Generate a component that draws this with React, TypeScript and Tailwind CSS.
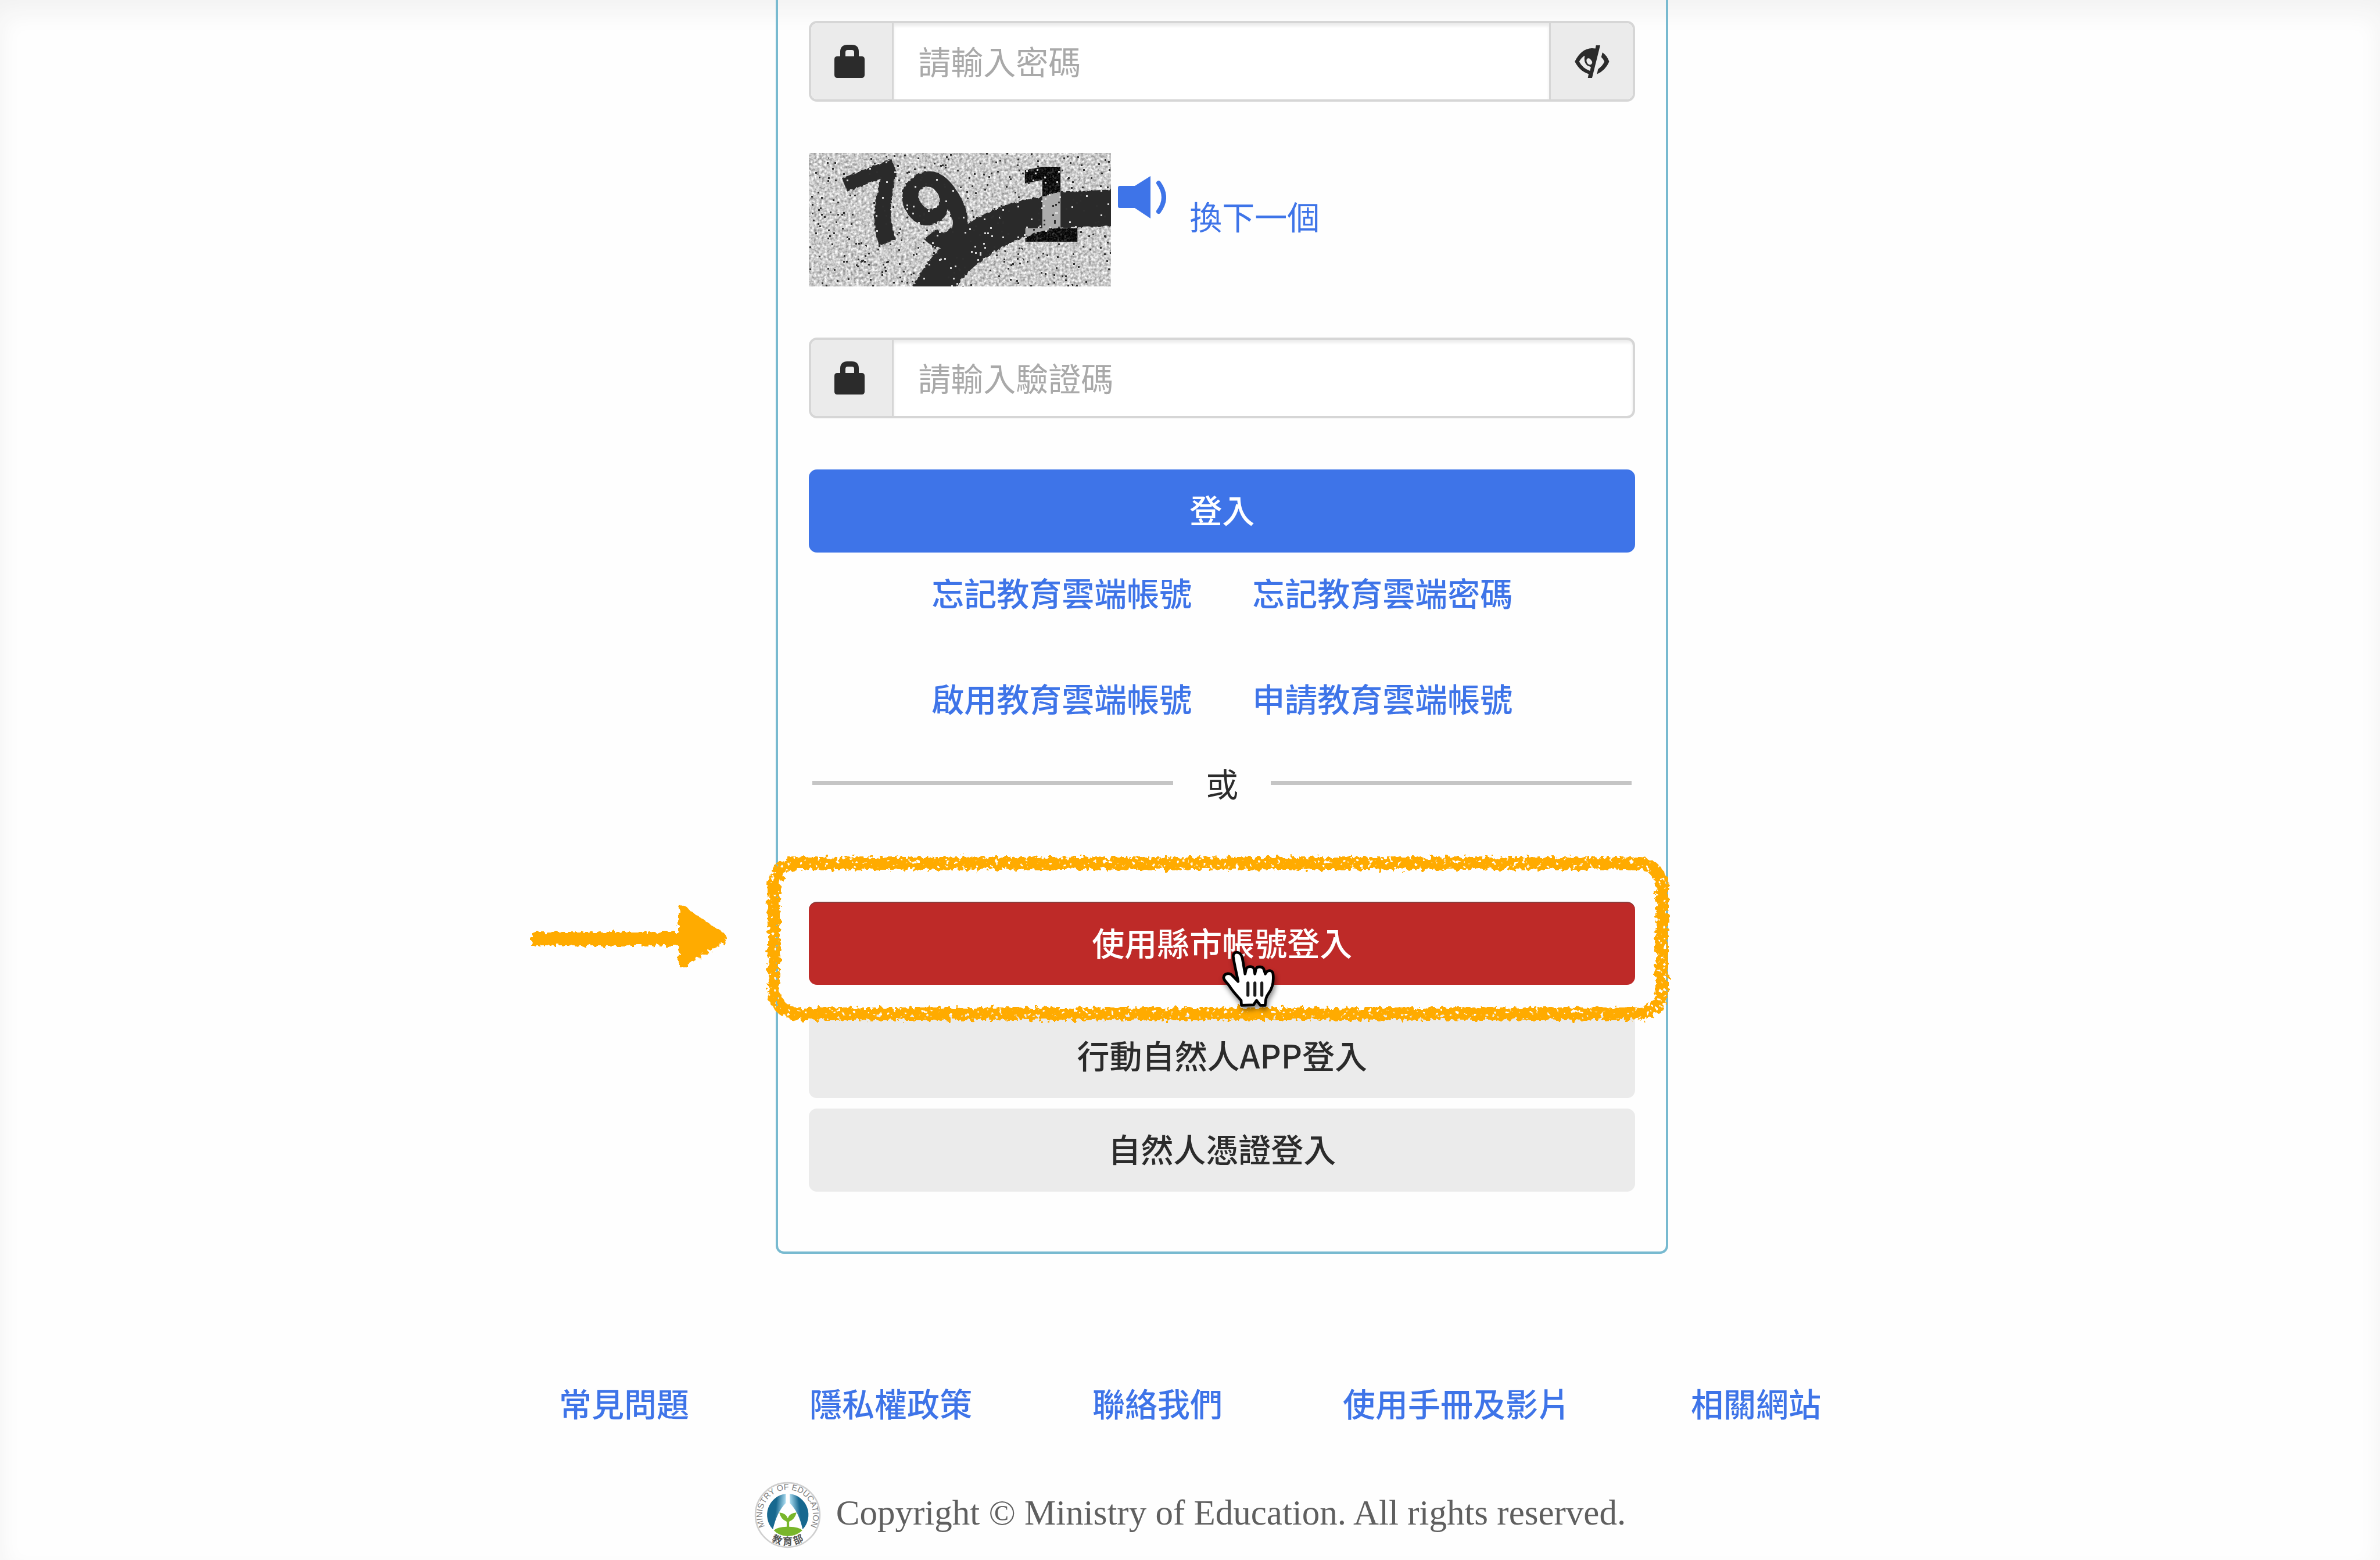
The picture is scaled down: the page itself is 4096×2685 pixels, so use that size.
import type { ReactNode } from "react";

const helpLinks = ["忘記教育雲端帳號", "忘記教育雲端密碼", "啟用教育雲端帳號", "申請教育雲端帳號"];

const footerLinks = ["常見問題", "隱私權政策", "聯絡我們", "使用手冊及影片", "相關網站"];

const CAPTCHA_WIDTH = 520;
const CAPTCHA_HEIGHT = 230;

// fixed seed, so the speckles stay in place between renders
const makeSpecks = (count: number) => {
  let seed = 79;
  const next = () => {
    seed = (seed * 16807) % 2147483647;
    return seed / 2147483647;
  };
  return Array.from({ length: count }, () => ({
    x: Math.floor(next() * CAPTCHA_WIDTH),
    y: Math.floor(next() * CAPTCHA_HEIGHT),
    light: next() > 0.6,
  }));
};

const specks = makeSpecks(600);

const LockIcon = () => (
  <svg viewBox="0 0 52 57" className="h-[57px] w-[52px]" fill="#2b2b2b" aria-hidden="true">
    <path
      fillRule="evenodd"
      d="M10 20V12C10 4 15 0 22 0H30C38 0 42 4 42 12V20H47Q52 20 52 25V52Q52 57 47 57H5Q0 57 0 52V25Q0 20 5 20ZM19 20H34V13Q34 9 30 9H23Q19 9 19 13Z"
    />
  </svg>
);

const EyeSlashIcon = () => (
  <svg viewBox="120 88 232 216" className="h-[56px] w-[60px]" fill="#2b2b2b" aria-hidden="true">
    <path
      fillRule="evenodd"
      d="M121 196Q162 110 235 107L258 109L262 88H290L236 304H208L213 278Q155 262 121 196ZM150 196Q165 168 187 156Q178 200 204 222L228 232L222 258Q172 240 150 196ZM201 180C208 168 224 172 236 196C240 212 226 222 212 214C200 206 196 190 201 180Z"
    />
    <path d="M305 135Q335 155 350 196Q325 255 268 280L276 246Q308 222 318 196Q312 180 297 166Z" />
  </svg>
);

const SpeakerIcon = () => (
  <svg viewBox="0 0 83 73" className="h-[73px] w-[83px]" aria-hidden="true">
    <path d="M0 20Q0 17 3 17H29L56 0V73L29 55H3Q0 55 0 52Z" fill="#3e74e8" />
    <path d="M70 12Q88 37 70 61" fill="none" stroke="#3e74e8" strokeWidth="8" strokeLinecap="round" />
  </svg>
);

const CaptchaPicture = () => (
  <svg
    viewBox="0 0 520 230"
    className="isolate h-[230px] w-[520px] shrink-0"
    role="img"
    aria-label="驗證碼圖片"
  >
    <defs>
      <filter id="grain" x="0" y="0" width="100%" height="100%" colorInterpolationFilters="sRGB">
        <feTurbulence type="fractalNoise" baseFrequency="0.22" numOctaves="2" seed="4" />
        <feColorMatrix values="0.75 0 0 0 0.42  0.75 0 0 0 0.42  0.75 0 0 0 0.42  0 0 0 0 1" />
      </filter>
      <filter id="jagged">
        <feTurbulence type="fractalNoise" baseFrequency="0.2" numOctaves="1" seed="9" />
        <feDisplacementMap in="SourceGraphic" scale="6" />
      </filter>
    </defs>
    <rect width="520" height="230" filter="url(#grain)" />
    <g fill="#2b2b2b" stroke="#2b2b2b" strokeWidth="4" filter="url(#jagged)">
      <text
        x="0"
        y="0"
        transform="translate(98 167) rotate(-21)"
        className="font-['Liberation_Sans'] text-[186px] font-bold"
      >
        7
      </text>
      <text
        x="0"
        y="0"
        transform="translate(208 177) rotate(-31)"
        className="font-['Liberation_Sans'] text-[184px] font-bold"
      >
        9
      </text>
      <path d="M181 231C215 165 285 92 398 79L428 70L520 65V124L423 128C360 140 290 175 250 231Z" />
    </g>
    <text
      x="352"
      y="153"
      fill="#d6d6d6"
      className="font-['DejaVu_Sans'] text-[176px] font-bold mix-blend-difference"
    >
      1
    </text>
    {specks.map(({ x, y, light }, index) => (
      <rect key={index} x={x} y={y} width="3" height="3" fill={light ? "#d8d8d8" : "#2e2e2e"} />
    ))}
  </svg>
);

const CrayonArrow = () => (
  <svg
    viewBox="0 0 340 114"
    className="pointer-events-none absolute right-full top-1 z-10 mr-[140px] h-[114px] w-[340px]"
    aria-hidden="true"
  >
    <defs>
      <filter id="crayon-arrow" x="-5%" y="-10%" width="110%" height="120%">
        <feTurbulence type="fractalNoise" baseFrequency="0.12" numOctaves="2" seed="3" result="noise" />
        <feDisplacementMap in="SourceGraphic" in2="noise" scale="14" />
      </filter>
    </defs>
    <g fill="#ffab00" filter="url(#crayon-arrow)">
      <path d="M2 48H258V72H2Z" />
      <path d="M256 8Q264 -4 276 12L334 50Q342 58 334 68L272 104Q262 118 256 104Z" />
    </g>
  </svg>
);

const CrayonFrame = () => (
  <svg
    className="pointer-events-none absolute -left-20 -top-[86px] z-10 h-[300px] w-[calc(100%+146px)]"
    aria-hidden="true"
  >
    <defs>
      <filter id="crayon-frame" x="-2%" y="-10%" width="104%" height="120%">
        <feTurbulence type="fractalNoise" baseFrequency="0.12" numOctaves="2" seed="7" result="noise" />
        <feDisplacementMap in="SourceGraphic" in2="noise" scale="15" result="rough" />
        <feTurbulence type="fractalNoise" baseFrequency="0.14" numOctaves="2" seed="21" />
        <feColorMatrix values="0 0 0 0 0  0 0 0 0 0  0 0 0 0 0  -14 0 0 0 10" result="holes" />
        <feComposite in="rough" in2="holes" operator="in" />
      </filter>
    </defs>
    <g filter="url(#crayon-frame)">
      <svg x="20" y="20" width="100%" height="260" overflow="visible">
        <rect
          height="259"
          rx="40"
          fill="none"
          stroke="#ffab00"
          strokeWidth="22"
          className="w-[calc(100%-40px)]"
        />
      </svg>
    </g>
  </svg>
);

const HandCursor = () => (
  <svg
    viewBox="92 100 348 400"
    className="pointer-events-none absolute left-1/2 top-[84px] z-20 h-[104px] w-[91px] overflow-visible drop-shadow-[2px_6px_4px_rgba(0,0,0,0.45)]"
    aria-hidden="true"
  >
    <path
      d="M166 142C160 104 214 98 226 150L244 255L250 226C256 200 300 200 304 226L309 255L316 222C325 200 365 205 370 230L378 255L388 240C408 226 430 235 430 262C434 310 425 350 400 383C384 405 380 420 377 463L345 463L320 430L300 460L220 463L218 430C190 400 165 375 140 335C125 312 105 300 102 280C105 248 145 245 162 268L198 305C190 260 172 190 166 142Z"
      fill="#fff"
      stroke="#000"
      strokeWidth="18"
      strokeLinejoin="round"
    />
    <path d="M263 315V396M309 315V396M355 315V396" stroke="#1c1c1c" strokeWidth="20" strokeLinecap="round" />
  </svg>
);

const MinistryLogo = () => (
  <svg viewBox="18 50 436 436" className="h-[115px] w-[115px] shrink-0" aria-hidden="true">
    <defs>
      <linearGradient id="leaf-left" x1="0" x2="1" y1="0.4" y2="0.6">
        <stop offset="0.45" stopColor="#17688f" />
        <stop offset="0.95" stopColor="#b5e4f7" />
      </linearGradient>
      <linearGradient id="leaf-right" x1="1" x2="0" y1="0.4" y2="0.6">
        <stop offset="0.45" stopColor="#17688f" />
        <stop offset="0.95" stopColor="#b5e4f7" />
      </linearGradient>
      <path id="ring-top" d="M97 360A166 166 0 1 1 375 360" />
      <path id="ring-bottom" d="M80 390A200 200 0 0 0 392 390" />
    </defs>
    <circle cx="236" cy="268" r="210" fill="#fff" stroke="#cfcfcf" strokeWidth="10" />
    <path d="M224 130A138 138 0 0 0 140 362Q165 250 224 190Z" fill="url(#leaf-left)" />
    <path d="M250 130A138 138 0 0 1 334 362Q310 250 250 190Z" fill="url(#leaf-right)" />
    <path
      d="M230 345V312Q190 295 182 252Q225 255 237 290Q248 255 294 252Q285 295 246 312V345Q310 346 332 368Q295 405 237 406Q180 405 146 368Q170 346 230 345Z"
      fill="#79b62b"
    />
    <text fill="#7d7d7d" className="font-['Liberation_Sans'] text-[54px]">
      <textPath href="#ring-top" startOffset="50%" textAnchor="middle">
        MINISTRY OF EDUCATION
      </textPath>
    </text>
    <text fill="#555" className="font-['Noto_Sans_CJK_TC'] text-[64px] font-bold">
      <textPath href="#ring-bottom" startOffset="50%" textAnchor="middle">
        教 育 部
      </textPath>
    </text>
  </svg>
);

type FieldProps = {
  id: string;
  label: string;
  type?: string;
  action?: ReactNode;
};

const Field = ({ id, label, type = "text", action }: FieldProps) => (
  <div className="flex h-[139px] overflow-hidden rounded-[14px] border-4 border-[#d6d6d6] bg-white">
    <label
      htmlFor={id}
      aria-label={label}
      className="flex w-[142px] shrink-0 items-center justify-center border-r-[3px] border-[#d6d6d6] bg-[#ebebeb] pr-2"
    >
      <LockIcon />
    </label>
    <input
      id={id}
      type={type}
      placeholder={label}
      aria-label={label}
      className="min-w-0 flex-1 px-[42px] pb-1 text-[56px] leading-[80px] text-[#2b2b2b] shadow-[inset_0_5px_5px_rgba(0,0,0,0.08)] outline-none placeholder:text-[#a9a9a9]"
    />
    {action}
  </div>
);

const buttonBase = "block h-[143px] w-full rounded-[14px] pb-2 text-[56px] font-medium leading-[80px]";

export default function App() {
  return (
    <div className="min-h-screen overflow-hidden bg-[#fefefe] font-['Noto_Sans_CJK_TC',sans-serif] text-[56px] leading-[80px] text-[#2b2b2b] shadow-[inset_0_22px_40px_0_#f2f2f2]">
      <main className="ml-[32.6%] w-[37.5%] rounded-b-[14px] border-4 border-t-0 border-[#78bad0] px-[53px] pb-[103px] pt-9">
        <form onSubmit={(event) => event.preventDefault()}>
          <Field
            id="password"
            label="請輸入密碼"
            type="password"
            action={
              <button
                type="button"
                aria-label="顯示密碼"
                className="flex w-[144px] shrink-0 items-center justify-center border-l-[3px] border-[#d6d6d6] bg-[#ebebeb]"
              >
                <EyeSlashIcon />
              </button>
            }
          />

          <div className="my-[88px] flex items-start">
            <CaptchaPicture />
            <button type="button" aria-label="播放語音驗證碼" className="ml-3 mt-10">
              <SpeakerIcon />
            </button>
            <a href="#captcha" className="ml-10 mt-[68px] text-[#3e74e8]">
              換下一個
            </a>
          </div>

          <Field id="captcha" label="請輸入驗證碼" />

          <button type="submit" className={`${buttonBase} mt-[88px] bg-[#3e74e8] text-white`}>
            登入
          </button>
        </form>

        <div className="mt-7 grid grid-cols-[auto_auto] justify-center gap-x-[104px] gap-y-[102px] font-medium text-[#3e74e8]">
          {helpLinks.map((label) => (
            <a key={label} href="#account">
              {label}
            </a>
          ))}
        </div>

        <div className="mx-1.5 mt-[66px] flex items-center">
          <span className="h-[7px] flex-1 bg-[#c5c5c5]" />
          <span className="w-[168px] text-center">或</span>
          <span className="h-[7px] flex-1 bg-[#c5c5c5]" />
        </div>

        <div className="relative mt-[165px]">
          <button type="button" className={`${buttonBase} border-t-2 border-[#8d3a39] bg-[#be2a28] text-white`}>
            使用縣市帳號登入
          </button>
          <CrayonArrow />
          <CrayonFrame />
          <HandCursor />
        </div>

        <button type="button" className={`${buttonBase} mt-[52px] bg-[#ebebeb]`}>
          行動自然人APP登入
        </button>
        <button type="button" className={`${buttonBase} mt-[18px] bg-[#ebebeb]`}>
          自然人憑證登入
        </button>
      </main>

      <footer className="mt-[216px] pb-5">
        <nav className="flex justify-center gap-[207px] font-medium text-[#3e74e8]" aria-label="頁尾連結">
          {footerLinks.map((label) => (
            <a key={label} href="#footer">
              {label}
            </a>
          ))}
        </nav>
        <div className="mt-[96px] flex items-center justify-center gap-[26px]">
          <MinistryLogo />
          <p className="pb-2 font-['Liberation_Serif',serif] text-[61px] text-[#5f5f5f]">
            Copyright © Ministry of Education. All rights reserved.
          </p>
        </div>
      </footer>
    </div>
  );
}
